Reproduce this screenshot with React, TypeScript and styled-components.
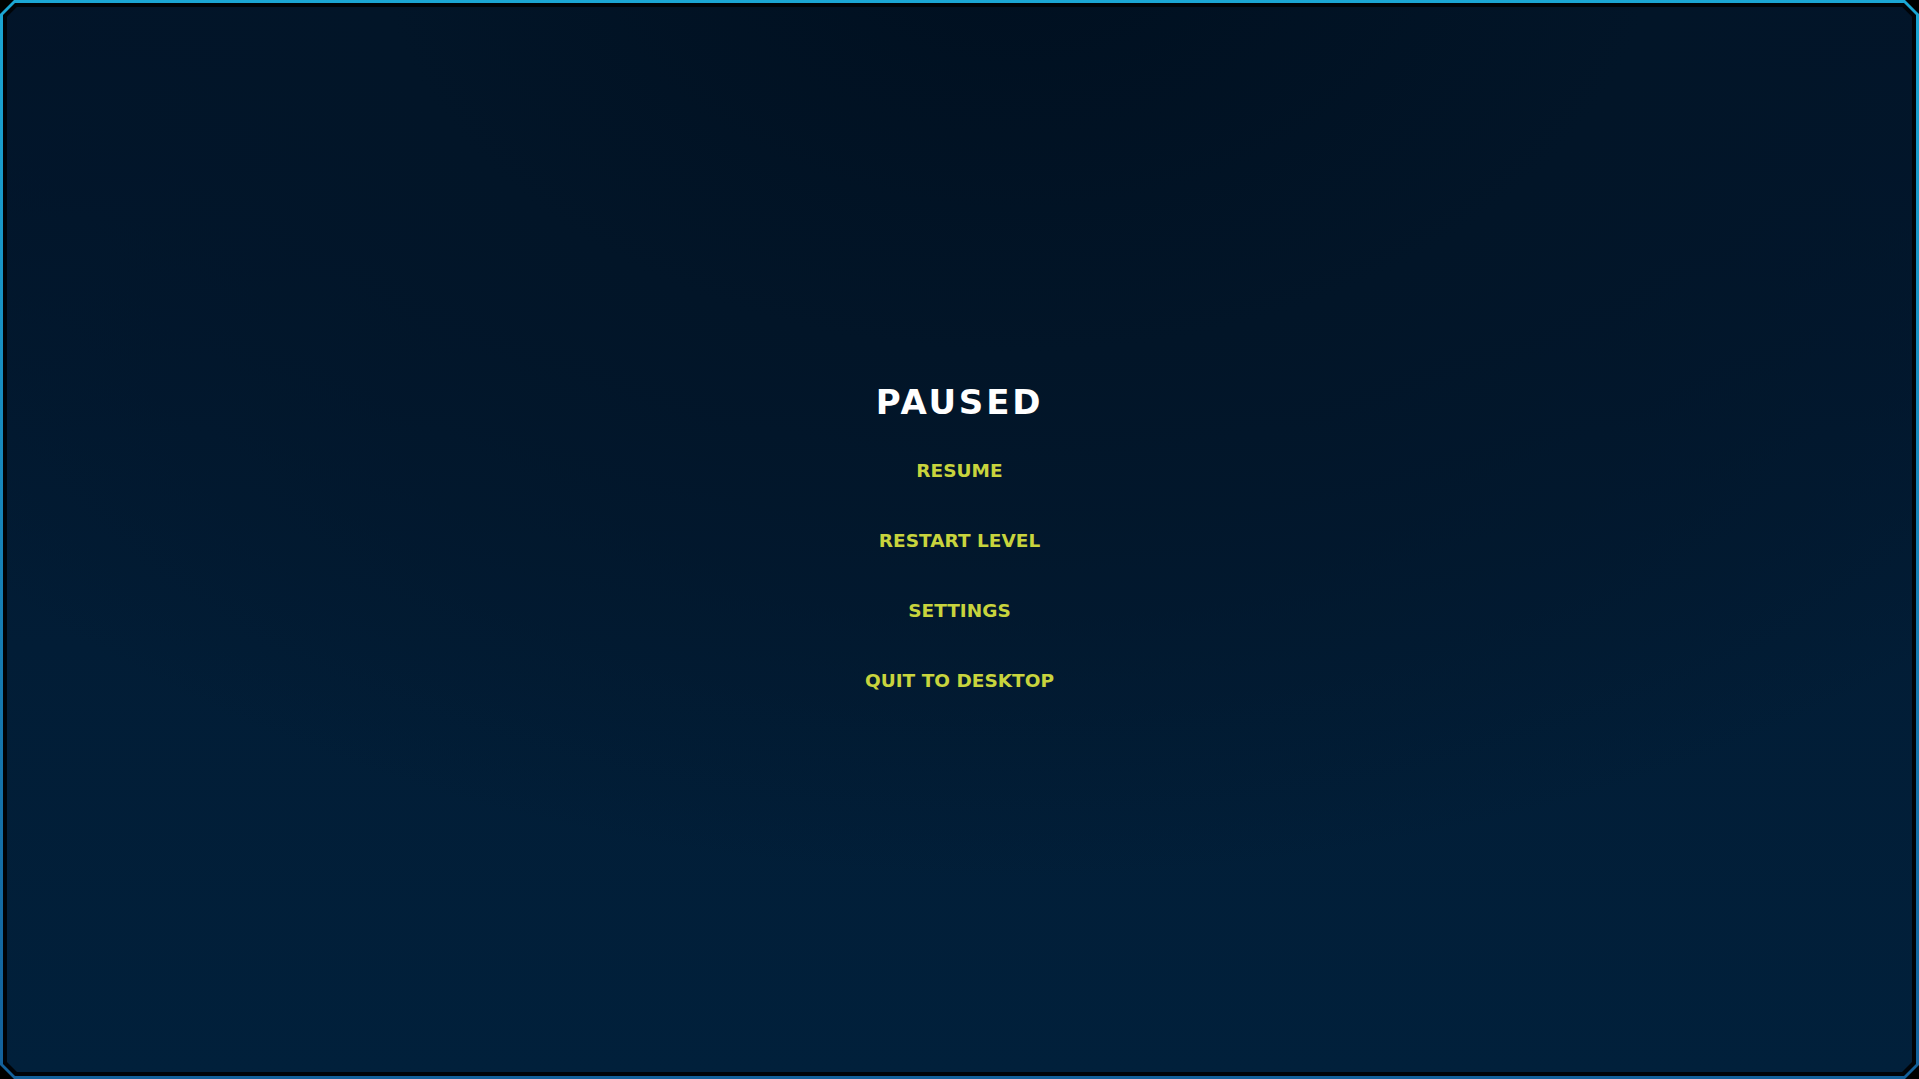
import * as React from 'react';
import styled, { createGlobalStyle } from 'styled-components';

const GlobalStyle = createGlobalStyle`
    html, body {
        margin: 0;
        padding: 0;
        background: #000;
    }
    * {
        box-sizing: border-box;
    }
`;

const chamfer = (size: number) => `polygon(
    ${size}px 0,
    calc(100% - ${size}px) 0,
    100% ${size}px,
    100% calc(100% - ${size}px),
    calc(100% - ${size}px) 100%,
    ${size}px 100%,
    0 calc(100% - ${size}px),
    0 ${size}px
)`;

const Frame = styled.div`
    height: 100vh;
    padding: 3px;
    background: linear-gradient(180deg, #1ba6d3 0%, #1783b8 50%, #13609a 100%);
    clip-path: ${chamfer(14)};
`;

const FrameGap = styled.div`
    height: 100%;
    padding: 4px;
    background: #000307;
    clip-path: ${chamfer(12)};
`;

const Screen = styled.main`
    height: 100%;
    clip-path: ${chamfer(10)};
    background:
        radial-gradient(ellipse 75% 90% at 53% -8%, #000f1f 0%, #021528 45%, rgba(2, 26, 48, 0) 100%),
        linear-gradient(180deg, #02142a 0%, #021d36 60%, #01203b 100%);
    display: flex;
    align-items: center;
    justify-content: center;
`;

const Menu = styled.nav`
    display: flex;
    flex-direction: column;
    align-items: center;
    margin-bottom: 4px;
    font-family: 'DejaVu Sans', 'Liberation Sans', sans-serif;
`;

const Title = styled.h1`
    margin: 0 0 37px;
    color: #ffffff;
    font-size: 34px;
    font-weight: 700;
    letter-spacing: 2.8px;
    line-height: 40px;
`;

const MenuItem = styled.button`
    background: none;
    border: none;
    padding: 0;
    cursor: pointer;
    color: #c8d43d;
    font-family: inherit;
    font-size: 18.5px;
    font-weight: 700;
    letter-spacing: 0;
    line-height: 24px;
    & + & {
        margin-top: 46px;
    }

    &:hover {
        color: #e3ee5a;
    }
`;

const items = ['RESUME', 'RESTART LEVEL', 'SETTINGS', 'QUIT TO DESKTOP'];

const App: React.FC = () => {
    return (
        <>
            <GlobalStyle />
            <Frame>
                <FrameGap>
                    <Screen>
                        <Menu>
                            <Title>PAUSED</Title>
                            {items.map((label) => (
                                <MenuItem key={label}>{label}</MenuItem>
                            ))}
                        </Menu>
                    </Screen>
                </FrameGap>
            </Frame>
        </>
    );
};

export default App;
